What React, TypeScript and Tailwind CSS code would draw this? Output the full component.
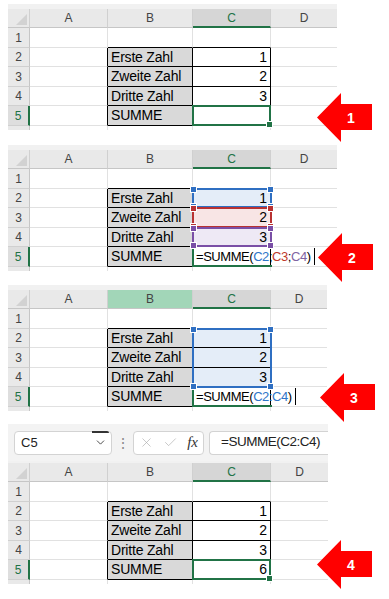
import { ReactNode } from "react";
import { ChevronDown, X, Check } from "lucide-react";

const rowH = ["h-[20px]", "h-[19px]", "h-[20px]", "h-[19px]", "h-[20px]"];
const labels = ["", "Erste Zahl", "Zweite Zahl", "Dritte Zahl", "SUMME"];

interface SheetProps {
  cols: string;
  greenB?: boolean;
  cBg?: string[];
  cContent: (row: number) => ReactNode;
  cOverlay?: (row: number) => ReactNode;
}

function Sheet({ cols, greenB, cBg, cContent, cOverlay }: SheetProps) {
  const head = "flex items-center justify-center h-[19px] border-r border-b border-r-[#d0d0d0] border-b-[#c6c6c6] text-[12px] text-[#444]";
  return (
    <div className={`grid ${cols} font-['Liberation_Sans',sans-serif]`}>
      {/* header row */}
      <div className="relative h-[19px] bg-[#e9e9e9] border-r border-b border-r-[#d0d0d0] border-b-[#c6c6c6]">
        <svg className="absolute right-[2px] bottom-[2px]" width="11" height="11" viewBox="0 0 11 11">
          <polygon points="11,0 11,11 0,11" fill="#d2d2d2" />
        </svg>
      </div>
      <div className={`${head} bg-[#e9e9e9]`}>A</div>
      <div className={`${head} ${greenB ? "bg-[#a2d6b8]" : "bg-[#e9e9e9]"}`}>B</div>
      <div className="flex items-center justify-center h-[19px] bg-[#d6d6d6] border-r border-r-[#d0d0d0] border-b-2 border-b-[#217346] text-[12px] text-[#217346]">
        C
      </div>
      <div className="flex items-center justify-center h-[19px] bg-[#e9e9e9] border-b border-b-[#c6c6c6] text-[12px] text-[#444]">
        D
      </div>

      {[1, 2, 3, 4, 5].map((r) => (
        <div key={r} className="contents">
          <div
            className={`${rowH[r - 1]} flex items-center justify-center text-[12px] border-b border-b-[#d0d0d0] ${
              r === 5
                ? "bg-[#dedede] border-r-2 border-r-[#217346] text-[#217346]"
                : "bg-[#e9e9e9] border-r border-r-[#c6c6c6] text-[#444]"
            }`}
          >
            {r}
          </div>
          <div
            className={`${rowH[r - 1]} bg-white border-r border-b border-b-[#e1e1e1] ${
              r >= 2 ? "border-r-black" : "border-r-[#e1e1e1]"
            }`}
          />
          <div
            className={`${rowH[r - 1]} flex items-center pl-[3px] text-[14px] tracking-[-0.2px] text-black border-r border-b ${
              r >= 2 ? "bg-[#d9d9d9] border-r-black border-b-black" : "bg-white border-r-[#e1e1e1] border-b-black"
            }`}
          >
            {labels[r - 1]}
          </div>
          <div
            className={`${rowH[r - 1]} relative flex items-center justify-end pr-[3px] text-[14px] text-black border-r border-b border-b-black ${
              r >= 2 ? "border-r-black" : "border-r-[#e1e1e1]"
            } ${cBg?.[r - 1] ?? "bg-white"}`}
          >
            {cContent(r)}
            {cOverlay?.(r)}
          </div>
          <div className={`${rowH[r - 1]} bg-white border-b border-b-[#e1e1e1]`} />
        </div>
      ))}

      {/* partly visible row 6 */}
      <div className="h-[4px] bg-[#e9e9e9] border-r border-r-[#c6c6c6]" />
      <div className="h-[4px] bg-white border-r border-r-[#e1e1e1]" />
      <div className="h-[4px] bg-white border-r border-r-[#e1e1e1]" />
      <div className="h-[4px] bg-white border-r border-r-[#e1e1e1]" />
      <div className="h-[4px] bg-white" />
    </div>
  );
}

function Handle({ pos, color }: { pos: string; color: string }) {
  return <div className={`absolute w-[5px] h-[5px] border border-white box-content ${pos} ${color}`} />;
}

function Active() {
  return (
    <div className="absolute -left-[1px] -top-[1px] -right-[1px] -bottom-[1px] border-2 border-[#217346]">
      <Handle pos="-right-[4px] -bottom-[4px]" color="bg-[#217346]" />
    </div>
  );
}

function RangeBox({ border, handle, h }: { border: string; handle: string; h?: string }) {
  return (
    <div className={`absolute -left-[1px] -top-[1px] w-[80px] ${h ?? "h-[21px]"} border-2 z-10 ${border}`}>
      <Handle pos="-left-[4px] -top-[4px]" color={handle} />
      <Handle pos="-right-[4px] -top-[4px]" color={handle} />
      <Handle pos="-left-[4px] -bottom-[4px]" color={handle} />
      <Handle pos="-right-[4px] -bottom-[4px]" color={handle} />
    </div>
  );
}

function EditCell({ children }: { children: ReactNode }) {
  return (
    <>
      <div className="absolute -left-[1px] top-0 w-[80px] -bottom-[1px] border-l-2 border-b-2 border-[#217346]" />
      <div className="absolute left-[3px] top-0 bottom-0 z-20 flex items-center whitespace-nowrap text-[13px] tracking-[-0.45px] text-black">
        {children}
        <span className="inline-block w-px h-[17px] bg-black ml-[3px]" />
      </div>
    </>
  );
}

function Arrow({ pos, n }: { pos: string; n: string }) {
  return (
    <div className={`absolute w-[55px] h-[49px] ${pos}`}>
      <svg width="55" height="49" viewBox="0 0 55 49" className="absolute inset-0">
        <polygon points="0,24.5 24,0 24,11 55,11 55,37 24,37 24,49" fill="#ff0000" />
      </svg>
      <span className="absolute left-[30px] top-[15px] text-[14px] font-bold text-white font-['Liberation_Sans',sans-serif]">
        {n}
      </span>
    </div>
  );
}

export default function App() {
  return (
    <div className="relative w-[389px] h-[599px] bg-white overflow-hidden">
      <div className="flex flex-col pl-[8px] pt-[4px]">
        {/* 1 */}
        <div className="w-[329px]">
          <div className="h-[5px] bg-[#f1f1f1]" />
          <Sheet
            cols="grid-cols-[22px_78px_85px_78px_66px]"
            cContent={(r) => (r >= 2 && r <= 4 ? r - 1 : "")}
            cOverlay={(r) => (r === 5 ? <Active /> : null)}
          />
        </div>

        {/* 2 */}
        <div className="w-[329px] mt-[15px]">
          <div className="h-[5px] bg-[#f1f1f1]" />
          <Sheet
            cols="grid-cols-[22px_78px_85px_78px_66px]"
            cBg={["bg-white", "bg-[#e4edf8]", "bg-[#f8e5e5]", "bg-[#eee9f5]", "bg-white"]}
            cContent={(r) =>
              r >= 2 && r <= 4 ? (
                r - 1
              ) : r === 5 ? (
                <EditCell>
                  =SUMME(<span className="text-[#2e75c8]">C2</span>;<span className="text-[#c0392b]">C3</span>;
                  <span className="text-[#8064a2]">C4</span>)
                </EditCell>
              ) : (
                ""
              )
            }
            cOverlay={(r) =>
              r === 2 ? (
                <RangeBox border="border-[#2f6fc2]" handle="bg-[#2f6fc2]" h="h-[20px]" />
              ) : r === 3 ? (
                <RangeBox border="border-[#b83232]" handle="bg-[#b83232]" h="h-[21px]" />
              ) : r === 4 ? (
                <RangeBox border="border-[#7a4fa6]" handle="bg-[#7a4fa6]" h="h-[20px]" />
              ) : null
            }
          />
        </div>

        {/* 3 */}
        <div className="w-[319px] mt-[14px]">
          <div className="h-[5px] bg-[#f1f1f1]" />
          <Sheet
            cols="grid-cols-[22px_78px_85px_78px_56px]"
            greenB
            cBg={["bg-white", "bg-[#e4edf8]", "bg-[#e4edf8]", "bg-[#e4edf8]", "bg-white"]}
            cContent={(r) =>
              r >= 2 && r <= 4 ? (
                r - 1
              ) : r === 5 ? (
                <EditCell>
                  =SUMME(<span className="text-[#2e75c8]">C2:C4</span>)
                </EditCell>
              ) : (
                ""
              )
            }
            cOverlay={(r) => (r === 2 ? <RangeBox border="border-[#2f6fc2]" handle="bg-[#2f6fc2]" h="h-[60px]" /> : null)}
          />
        </div>

        {/* 4 */}
        <div className="w-[320px] mt-[13px]">
          <div className="flex items-center h-[37px] bg-[#f3f3f3] pl-[6px] font-['Liberation_Sans',sans-serif]">
            <div className="relative flex items-center justify-between w-[98px] h-[24px] bg-white border border-[#d3d3d3] rounded-[4px] pl-[6px] pr-[4px] text-[13px] text-[#222]">
              <span>C5</span>
              <ChevronDown size={13} strokeWidth={1.6} className="text-[#333]" />
              <div className="absolute -top-[1px] right-[2px] w-[17px] h-[2px] bg-[#333] rounded-tr-[3px]" />
            </div>
            <span className="w-[21px] text-center text-[14px] leading-none text-[#888]">⋮</span>
            <div className="flex items-center justify-between w-[71px] h-[24px] bg-white border border-[#d3d3d3] rounded-[4px] px-[5px]">
              <X size={15} strokeWidth={1} className="text-[#a8a8a8]" />
              <Check size={15} strokeWidth={1} className="text-[#a8a8a8]" />
              <span className="font-['Liberation_Serif',serif] italic text-[15px] text-[#333]">fx</span>
            </div>
            <div className="flex items-center flex-1 h-[24px] ml-[5px] bg-white border border-r-0 border-[#d3d3d3] rounded-l-[4px] pl-[11px] text-[13.5px] tracking-[-0.5px] text-[#222]">
              =SUMME(C2:C4)
            </div>
          </div>
          <div className="h-[2px] bg-[#f1f1f1]" />
          <Sheet
            cols="grid-cols-[22px_78px_85px_78px_57px]"
            cContent={(r) => (r >= 2 && r <= 4 ? r - 1 : r === 5 ? 6 : "")}
            cOverlay={(r) => (r === 5 ? <Active /> : null)}
          />
        </div>
      </div>

      <Arrow pos="left-[317px] top-[93px]" n="1" />
      <Arrow pos="left-[318px] top-[233px]" n="2" />
      <Arrow pos="left-[320px] top-[373px]" n="3" />
      <Arrow pos="left-[317px] top-[540px]" n="4" />
    </div>
  );
}
